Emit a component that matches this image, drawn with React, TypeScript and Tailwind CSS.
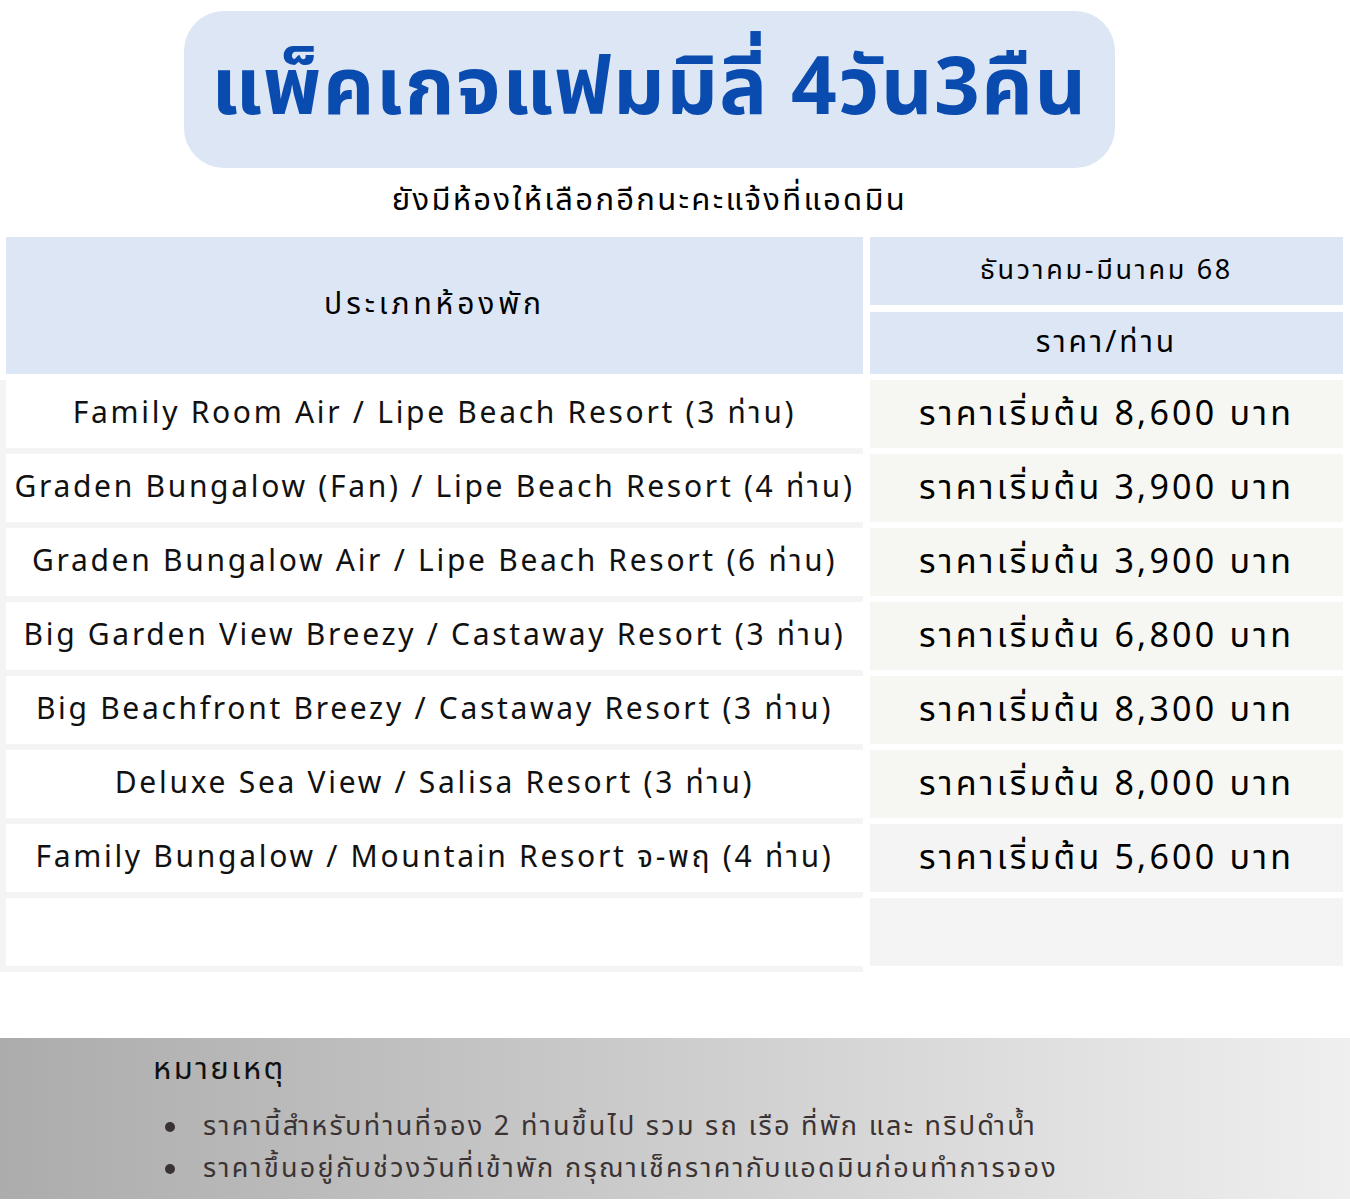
const thai = { fontFamily: "'Noto Sans Thai', 'Noto Sans', 'Liberation Sans', sans-serif" }

const rooms = [
  { name: 'Family Room Air / Lipe Beach Resort (3 ท่าน)', price: 'ราคาเริ่มต้น 8,600 บาท', bg: 'bg-[#f6f7f2]' },
  { name: 'Graden Bungalow (Fan) / Lipe Beach Resort (4 ท่าน)', price: 'ราคาเริ่มต้น 3,900 บาท', bg: 'bg-[#f6f7f2]' },
  { name: 'Graden Bungalow Air / Lipe Beach Resort (6 ท่าน)', price: 'ราคาเริ่มต้น 3,900 บาท', bg: 'bg-[#f6f7f2]' },
  { name: 'Big Garden View Breezy / Castaway Resort (3 ท่าน)', price: 'ราคาเริ่มต้น 6,800 บาท', bg: 'bg-[#f6f7f2]' },
  { name: 'Big Beachfront Breezy / Castaway Resort (3 ท่าน)', price: 'ราคาเริ่มต้น 8,300 บาท', bg: 'bg-[#f6f7f2]' },
  { name: 'Deluxe Sea View / Salisa Resort (3 ท่าน)', price: 'ราคาเริ่มต้น 8,000 บาท', bg: 'bg-[#f6f7f2]' },
  { name: 'Family Bungalow / Mountain Resort จ-พฤ (4 ท่าน)', price: 'ราคาเริ่มต้น 5,600 บาท', bg: 'bg-[#f4f4f4]' },
  { name: '', price: '', bg: 'bg-[#f4f4f4]' },
]

export default function App() {
  return (
    <div className="relative h-[1200px] w-[1350px] overflow-hidden bg-white text-black" style={thai}>
      <div className="ml-[184px] w-[931px] pt-[11px]">
        <div className="flex h-[157px] items-center justify-center rounded-[40px] bg-[#dce6f4]">
          <h1 className="text-[80px] font-bold leading-none tracking-[1.5px] text-[#0a4bb0]">แพ็คเกจแฟมมิลี่ 4วัน3คืน</h1>
        </div>
        <p className="mt-[13px] text-center text-[31px] leading-[40px] tracking-[2.3px]">ยังมีห้องให้เลือกอีกนะคะแจ้งที่แอดมิน</p>
      </div>

      <div className="mt-[16px] flex gap-[7px]">
        <div className="w-[863px]">
          <div className="ml-[6px] flex h-[137px] items-center justify-center bg-[#dce6f4] text-[30px] tracking-[3.9px]">ประเภทห้องพัก</div>
          <div className="mt-[6px] flex flex-col gap-[6px] bg-[#f4f4f4] pb-[6px] pl-[6px]">
            {rooms.map((r, i) => (
              <div key={i} className="flex h-[68px] items-center justify-center bg-white text-[30px] tracking-[2.7px] text-[#111]">
                {r.name}
              </div>
            ))}
          </div>
        </div>
        <div className="w-[473px]">
          <div className="flex h-[68px] items-center justify-center bg-[#dce6f4] text-[27px] tracking-[2.7px]">ธันวาคม-มีนาคม 68</div>
          <div className="mt-[7px] flex h-[62px] items-center justify-center bg-[#dce6f4] text-[30px] tracking-[3px]">ราคา/ท่าน</div>
          <div className="mt-[6px] flex flex-col gap-[6px]">
            {rooms.map((r, i) => (
              <div key={i} className={`flex h-[68px] items-center justify-center text-[34px] tracking-[3.2px] ${r.bg}`}>
                {r.price}
              </div>
            ))}
          </div>
        </div>
      </div>

      <div className="mt-[66px] h-[161px] bg-gradient-to-r from-[#acacac] to-[#efefef] pl-[153px] pt-[10px]">
        <p className="text-[31px] leading-[44px] tracking-[2.5px] text-[#111]">หมายเหตุ</p>
        <ul className="mt-[14px] text-[27px] leading-[42px] tracking-[2.3px] text-[#3b3333]">
          <li className="flex items-center">
            <span className="ml-[12px] mr-[28px] h-[10px] w-[10px] rounded-full bg-[#3b3333]" />
            ราคานี้สำหรับท่านที่จอง 2 ท่านขึ้นไป รวม รถ เรือ ที่พัก และ ทริปดำน้ำ
          </li>
          <li className="flex items-center">
            <span className="ml-[12px] mr-[28px] h-[10px] w-[10px] rounded-full bg-[#3b3333]" />
            ราคาขึ้นอยู่กับช่วงวันที่เข้าพัก กรุณาเช็คราคากับแอดมินก่อนทำการจอง
          </li>
        </ul>
      </div>
    </div>
  )
}
